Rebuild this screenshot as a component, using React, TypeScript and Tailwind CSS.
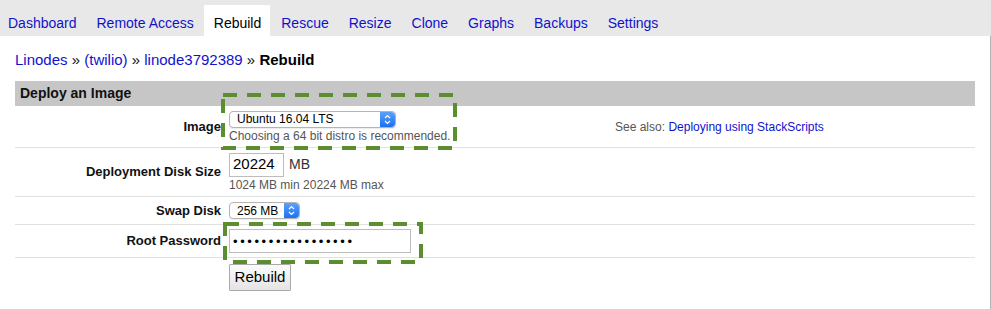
const tabs = [
  'Dashboard',
  'Remote Access',
  'Rebuild',
  'Rescue',
  'Resize',
  'Clone',
  'Graphs',
  'Backups',
  'Settings',
]

function SelectArrows() {
  return (
    <span className="flex h-full w-[15px] items-center justify-center rounded-r-[4px] bg-gradient-to-b from-[#5aa1f8] to-[#1d6ff0]">
      <svg width="7" height="11" viewBox="0 0 7 11" fill="none">
        <path d="M1 4 L3.5 1.5 L6 4" stroke="white" strokeWidth="1.2" />
        <path d="M1 7 L3.5 9.5 L6 7" stroke="white" strokeWidth="1.2" />
      </svg>
    </span>
  )
}

function MacSelect({ value, width }: { value: string; width: string }) {
  return (
    <div
      className={`flex h-[17px] items-center rounded-[4px] border border-[#b4b4b4] bg-white shadow-[0_1px_1px_rgba(0,0,0,0.08)] ${width}`}
    >
      <span className="flex-1 pl-[7px] text-[12px] leading-none text-black">
        {value}
      </span>
      <SelectArrows />
    </div>
  )
}

// green dashed annotation drawn over the form
function DashedBox({ className }: { className: string }) {
  return (
    <svg className={`pointer-events-none absolute ${className}`} fill="none">
      <rect
        x="2"
        y="2"
        width="calc(100% - 4px)"
        height="calc(100% - 4px)"
        stroke="#5c8e2f"
        strokeWidth="4"
        strokeDasharray="14 10"
      />
    </svg>
  )
}

function Row({
  label,
  children,
  className = '',
}: {
  label: string
  children: React.ReactNode
  className?: string
}) {
  return (
    <div className={`flex items-center border-b border-[#e1e1e1] ${className}`}>
      <div className="w-[206px] text-right text-[13px] font-bold text-[#111]">
        {label}
      </div>
      <div className="ml-[8px] flex-1">{children}</div>
    </div>
  )
}

export default function App() {
  return (
    <div className="w-[991px] bg-white font-['Liberation_Sans',Arial,sans-serif] text-[#111]">
      <div className="flex h-[36px] items-end gap-[1px] bg-[#e8e8e8] pl-0">
        {tabs.map((t) => (
          <div
            key={t}
            className={`h-[31px] pl-[10px] pr-[9px] pt-[8px] text-[14px] first:ml-[-2px] ${
              t === 'Rebuild' ? 'bg-white text-black' : 'text-[#1212cc]'
            }`}
          >
            {t}
          </div>
        ))}
      </div>

      <div className="relative border-r border-[#b3b3b3] px-[15px] pb-[18px]">
        <div className="pt-[15px] pb-[13px] text-[15px] leading-[17px]">
          <span className="text-[#1212cc]">Linodes</span> »{' '}
          <span className="text-[#1212cc]">(twilio)</span> »{' '}
          <span className="text-[#1212cc]">linode3792389</span> »{' '}
          <span className="font-bold text-black">Rebuild</span>
        </div>

        <div className="flex h-[25px] items-center bg-[#c6c6c6] pl-[5px] text-[14px] font-bold text-[#111]">
          Deploy an Image
        </div>

        <Row label="Image" className="h-[42px]">
          <div className="flex items-center">
            <div className="w-[386px]">
              <MacSelect value="Ubuntu 16.04 LTS" width="w-[167px]" />
              <div className="mt-[2px] text-[12px] leading-[13px] text-[#555]">
                Choosing a 64 bit distro is recommended.
              </div>
            </div>
            <div className="text-[12px] text-[#555]">
              See also:{' '}
              <span className="text-[#1212cc]">Deploying using StackScripts</span>
            </div>
          </div>
        </Row>

        <Row label="Deployment Disk Size" className="h-[49px]">
          <div className="flex items-center">
            <div className="flex h-[24px] w-[55px] items-center border border-[#bdbdbd] pl-[3px] text-[15px] text-black">
              20224
            </div>
            <span className="ml-[5px] text-[14px] text-[#333]">MB</span>
          </div>
          <div className="mt-[2px] text-[12px] leading-[13px] text-[#555]">
            1024 MB min 20224 MB max
          </div>
        </Row>

        <Row label="Swap Disk" className="h-[28px]">
          <MacSelect value="256 MB" width="w-[71px]" />
        </Row>

        <Row label="Root Password" className="h-[33px]">
          <input
            type="password"
            readOnly
            value="aaaaaaaaaaaaaaaaa"
            className="h-[24px] w-[182px] border border-[#bdbdbd] pl-[3px] text-[13px] tracking-[2.6px] text-black outline-none"
          />
        </Row>

        <div className="ml-[214px] mt-[6px]">
          <button
            type="button"
            className="h-[27px] w-[62px] rounded-[1px] border border-[#a9a9a9] bg-gradient-to-b from-[#fbfbfb] to-[#e4e4e4] text-[15px] text-black"
          >
            Rebuild
          </button>
        </div>

        <DashedBox className="left-[221px] top-[57px] h-[57px] w-[236px]" />
        <DashedBox className="left-[223px] top-[186px] h-[42px] w-[200px]" />
      </div>
    </div>
  )
}
